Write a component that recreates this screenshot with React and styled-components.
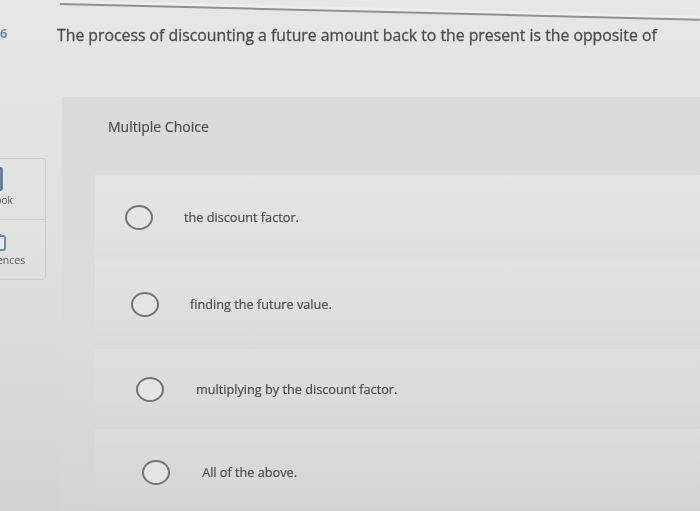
import React from 'react'
import styled, { createGlobalStyle } from 'styled-components'

const GlobalStyle = createGlobalStyle`
  html, body {
    margin: 0;
    padding: 0;
  }
  body {
    width: 700px;
    height: 511px;
    overflow: hidden;
    background: linear-gradient(180deg, #e6e7e4 0%, #dfe1de 45%, #d2d4d1 100%);
    font-family: 'Open Sans', 'Lato', sans-serif;
    color: #4b4d4e;
  }
`

const Page = styled.div`
  display: grid;
  grid-template-columns: 45px 1fr;
  height: 511px;
  filter: blur(0.35px);
`

const Sidebar = styled.aside`
  display: flex;
  flex-direction: column;
  padding-top: 25px;
`

const QuestionNumber = styled.div`
  font-size: 13px;
  font-weight: 700;
  color: #6f8aa6;
  line-height: 16px;
`

const ToolCard = styled.div`
  margin-top: 117px;
  margin-left: -50px;
  width: 94px;
  border: 1px solid #c9cbc8;
  border-radius: 4px;
  background: rgba(255, 255, 255, 0.06);
  display: flex;
  flex-direction: column;
`

const ToolItem = styled.div`
  height: 60px;
  display: flex;
  flex-direction: column;
  align-items: center;
  justify-content: ${p => (p.first ? 'flex-start' : 'center')};
  padding-top: ${p => (p.first ? '8px' : '0')};
  gap: 3px;
  border-top: ${p => (p.first ? 'none' : '1px solid #cdcfcc')};
  color: #55585a;
  box-sizing: border-box;
`

const ToolLabel = styled.span`
  font-size: ${p => p.size}px;
  line-height: 12px;
`

const Main = styled.main`
  display: flex;
  flex-direction: column;
`

const TopRule = styled.div`
  margin-left: 15px;
  height: 3px;
  border-bottom: 2px solid #8e9192;
  background: #eeefec;
  transform: rotate(1.4deg);
  transform-origin: left top;
`

const Question = styled.h1`
  margin: 20px 0 0 12px;
  font-size: 15.8px;
  font-weight: 400;
  line-height: 20px;
  color: #4a4c4d;
  -webkit-text-stroke: 0.3px #4a4c4d;
  white-space: nowrap;
`

const Panel = styled.section`
  margin: 52px 0 0 17px;
  flex: 1;
  background: linear-gradient(180deg, #d9dbd8 0%, #dadcd9 60%, #d3d5d2 100%);
  display: flex;
  flex-direction: column;
`

const PanelTitle = styled.div`
  padding: 22px 0 0 46px;
  font-size: 14px;
  line-height: 16px;
  color: #4b4d4e;
  -webkit-text-stroke: 0.2px #4b4d4e;
`

const Options = styled.div`
  margin: 40px 0 0 33px;
  flex: 1;
  display: flex;
  flex-direction: column;
  background: linear-gradient(180deg, #e2e4e1 0%, #dcdedb 50%, #d5d7d4 100%);
`

const OptionRow = styled.label`
  height: ${p => p.h}px;
  display: flex;
  align-items: center;
  gap: ${p => 31 + p.shift / 10}px;
  padding-left: ${p => 30 + p.shift}px;
  box-sizing: border-box;
  background: linear-gradient(
    180deg,
    rgba(255, 255, 255, 0.06) 0%,
    rgba(255, 255, 255, 0) 60%,
    rgba(0, 0, 0, 0.015) 100%
  );
  cursor: pointer;
`

const Radio = styled.span`
  width: 24px;
  height: 21px;
  border: 2px solid #707374;
  border-radius: 50%;
  flex-shrink: 0;
  background: #e3e5e2;
`

const OptionText = styled.span`
  font-size: 12.7px;
  line-height: 14px;
  color: #4a4c4d;
  -webkit-text-stroke: 0.2px #4a4c4d;
`

const BookIcon = () => (
  <svg width="10" height="24" viewBox="0 0 10 24">
    <rect x="1" y="1" width="8" height="22" rx="1" fill="#6f8aa8" stroke="#4f6b88" strokeWidth="1.5" />
    <line x1="3" y1="5" x2="7" y2="5" stroke="#d6dde5" strokeWidth="1" />
  </svg>
)

const RefIcon = () => (
  <svg width="18" height="18" viewBox="0 0 18 18">
    <path d="M2 5 Q2 3 4 3 L14 3 Q16 3 16 5 L16 15 Q16 17 14 17 L4 17 Q2 17 2 15 Z" fill="#e6ebef" stroke="#6d8aa7" strokeWidth="2" />
    <path d="M4 3 L9 1 L14 3" fill="none" stroke="#6d8aa7" strokeWidth="1.5" />
  </svg>
)

const choices = [
  { text: 'the discount factor.', h: 84 },
  { text: 'finding the future value.', h: 90 },
  { text: 'multiplying by the discount factor.', h: 80 },
  { text: 'All of the above.', h: 86 }
]

export default function App() {
  return (
    <>
      <GlobalStyle />
      <Page>
        <Sidebar>
          <QuestionNumber>6</QuestionNumber>
          <ToolCard>
            <ToolItem first>
              <BookIcon />
              <ToolLabel size={10}>eBook</ToolLabel>
            </ToolItem>
            <ToolItem>
              <RefIcon />
              <ToolLabel size={10.5}>References</ToolLabel>
            </ToolItem>
          </ToolCard>
        </Sidebar>
        <Main>
          <TopRule />
          <Question>
            The process of discounting a future amount back to the present is the opposite of
          </Question>
          <Panel>
            <PanelTitle>Multiple Choice</PanelTitle>
            <Options>
              {choices.map((c, i) => (
                <OptionRow key={c.text} h={c.h} shift={i * 5.5}>
                  <Radio />
                  <OptionText>{c.text}</OptionText>
                </OptionRow>
              ))}
            </Options>
          </Panel>
        </Main>
      </Page>
    </>
  )
}
